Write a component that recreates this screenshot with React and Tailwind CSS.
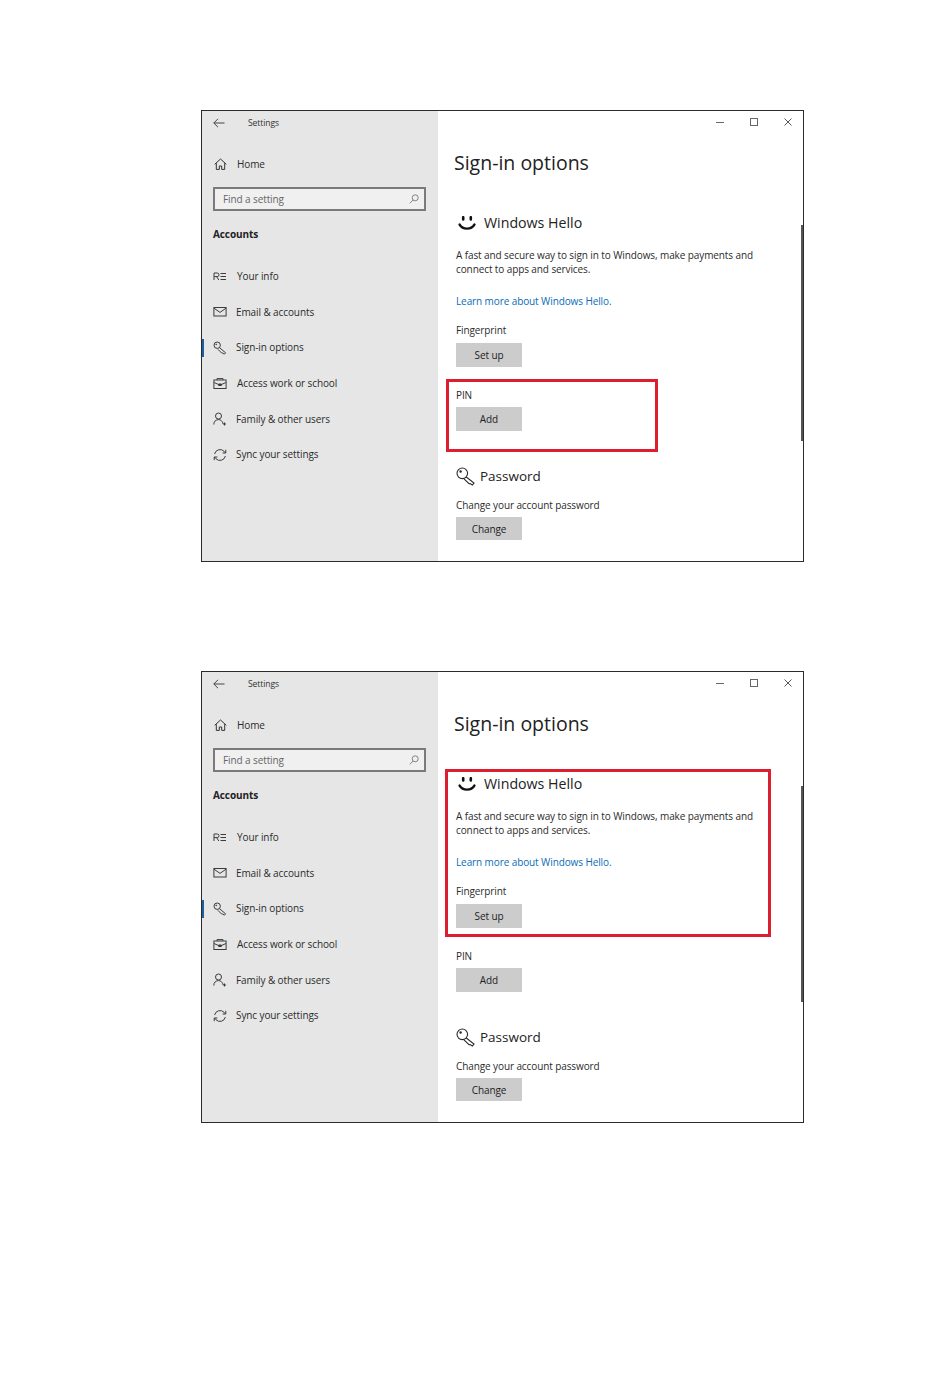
const navItems = [
  { label: "Your info", icon: "info", textClass: "ml-[10px]" },
  { label: "Email & accounts", icon: "mail", textClass: "ml-[9px]" },
  { label: "Sign-in options", icon: "key", textClass: "ml-[9px]", active: true },
  { label: "Access work or school", icon: "work", textClass: "ml-[10px]" },
  { label: "Family & other users", icon: "family", textClass: "ml-[9px]" },
  { label: "Sync your settings", icon: "sync", textClass: "ml-[9px]" },
];

function NavIcon({ name }) {
  const common = {
    width: 14,
    height: 14,
    viewBox: "0 0 14 14",
    fill: "none",
    stroke: "#3c3c3c",
    strokeWidth: 1,
  };
  if (name === "info") {
    return (
      <svg {...common}>
        <path d="M1 10V3h3.2a1.8 1.8 0 0 1 0 3.6H1M3.6 6.6 5.8 10M7.5 3.5H13M7.5 6.5H13M7.5 9.5H13" />
      </svg>
    );
  }
  if (name === "mail") {
    return (
      <svg {...common}>
        <rect x="0.9" y="2.5" width="12.2" height="8.5" />
        <path d="M1 3.2 7 7.4l6-4.2" />
      </svg>
    );
  }
  if (name === "key") {
    return (
      <svg {...common}>
        <circle cx="4.2" cy="4.2" r="3.2" />
        <path d="m6.4 6.6 6.2 5.2-1.3 1.4-1.7-1.3-.9.2-3.8-3.8" />
        <circle cx="3.2" cy="3.4" r=".4" fill="#3c3c3c" />
      </svg>
    );
  }
  if (name === "work") {
    return (
      <svg {...common}>
        <rect x="0.9" y="3" width="12.2" height="8.5" />
        <path d="M4 3V1.6h6V3M1 5.5l4.6 2h2.8l4.6-2M5.6 7h2.8v1.5H5.6z" />
      </svg>
    );
  }
  if (name === "family") {
    return (
      <svg {...common}>
        <circle cx="5.5" cy="4" r="3" />
        <path d="M.8 12.5c0-3 2-4.9 4.7-4.9 1.2 0 2.2.4 3 1.2 1 .9 1.4 2 1.5 3.2M11.5 10.5v3M10 12h3" />
      </svg>
    );
  }
  return (
    <svg {...common}>
      <path d="M1.6 6a5.6 5.6 0 0 1 9.6-2.6L12.6 5M12.4 8a5.6 5.6 0 0 1-9.6 2.6L1.4 9" />
      <path d="M12.8 1.8V5H9.6M1.2 12.2V9h3.2" />
    </svg>
  );
}

function KeyLarge() {
  return (
    <svg width="19" height="19" viewBox="0 0 19 19" fill="none" stroke="#2a2a2a" strokeWidth="1.1">
      <circle cx="6.3" cy="6.3" r="5.3" />
      <circle cx="4.6" cy="4.6" r=".7" fill="#2a2a2a" />
      <path d="m10 9.8 8 6.2-1.7 2-2.2-1.5-1.1.2-5-4.9" />
    </svg>
  );
}

function Smile() {
  return (
    <svg width="18" height="14" viewBox="0 0 18 14" fill="none" stroke="#111" strokeLinecap="round">
      <path d="M5.2 1.2v2.2M12.8 1.2v2.2" strokeWidth="2.6" />
      <path d="M1.6 8.6c1.5 2.6 4.2 4 7.4 4s5.9-1.4 7.4-4" strokeWidth="2.4" />
    </svg>
  );
}

function SettingButton({ label, className }) {
  return (
    <button type="button" className={`block h-6 w-[66px] bg-[#cccccc] text-[10px] leading-6 text-[#222] ${className || ""}`}>
      {label}
    </button>
  );
}

function SettingsWindow({ children }) {
  return (
    <div className="relative flex h-[452px] w-[603px] border border-[#2b2b2b] bg-white font-['Open_Sans',sans-serif] text-[10px] tracking-[-0.1px] text-[#2b2b2b]">
      <aside className="flex w-[236px] shrink-0 flex-col bg-[#e6e6e6]">
        <div className="flex h-6 items-center pl-[11px]">
          <svg width="12" height="10" viewBox="0 0 12 10" fill="none" stroke="#444" strokeWidth="1">
            <path d="M11.5 5H.8M5 .8.8 5 5 9.2" />
          </svg>
          <span className="ml-[23px] text-[8.6px] text-[#333]">Settings</span>
        </div>
        <div className="mt-[17px] flex h-6 items-center pl-[12px]">
          <svg width="13" height="12" viewBox="0 0 13 12" fill="none" stroke="#333" strokeWidth="1">
            <path d="M.7 6.3 6.5 1l5.8 5.3M2.3 5.2v6.2h3V8h2.4v3.4h3V5.2" />
          </svg>
          <span className="ml-[10px]">Home</span>
        </div>
        <div className="ml-[11px] mt-[11px] flex h-[24px] w-[213px] items-center justify-between border-2 border-[#7a7a7a] bg-[#f0f0f0] pl-2 pr-[5px] text-[#666]">
          <span>Find a setting</span>
          <svg width="10" height="10" viewBox="0 0 10 10" fill="none" stroke="#777" strokeWidth=".9">
            <circle cx="6.2" cy="3.8" r="3" />
            <path d="M4 6 .8 9.4" />
          </svg>
        </div>
        <div className="ml-[11px] mt-[13px] font-bold leading-[20px] text-[#222]">Accounts</div>
        <nav className="mt-[15px] flex flex-col">
          {navItems.map((item) => (
            <div key={item.label} className="relative flex h-[35.6px] items-center pl-[11px]">
              {item.active && <span className="absolute left-0 top-[9px] h-[18px] w-[2px] bg-[#1f5f9e]" />}
              <NavIcon name={item.icon} />
              <span className={item.textClass}>{item.label}</span>
            </div>
          ))}
        </nav>
      </aside>
      <main className="relative min-w-0 flex-1 pl-[18px]">
        <div className="absolute right-[11px] top-[5px] flex h-3 w-[76px] items-center justify-between text-[#444]">
          <span className="h-px w-[8px] bg-[#666]" />
          <span className="h-[8px] w-[8px] border border-[#666]" />
          <svg width="8" height="8" viewBox="0 0 8 8" stroke="#444" strokeWidth=".9">
            <path d="m.5.5 7 7M7.5.5l-7 7" />
          </svg>
        </div>
        <span className="absolute right-0 top-[114px] h-[216px] w-[2px] bg-[#555]" />
        <h1 className="-ml-[2px] pt-[36px] text-[19.5px] font-normal leading-[32px] tracking-normal text-[#222]">Sign-in options</h1>
        <div className="ml-[2px] mt-[32px] flex h-6 items-center">
          <Smile />
          <h2 className="ml-[8px] text-[14.2px] font-normal tracking-normal text-[#222]">Windows Hello</h2>
        </div>
        <p className="mt-[13px] w-[310px] leading-[14px]">
          A fast and secure way to sign in to Windows, make payments and connect to apps and services.
        </p>
        <a className="mt-[18px] block leading-[14px] text-[#0a6cb8]">Learn more about Windows Hello.</a>
        <div className="mt-[15px] leading-[14px]">Fingerprint</div>
        <SettingButton label="Set up" className="mt-[6px]" />
        <div className="mt-[21px] leading-[14px]">PIN</div>
        <SettingButton label="Add" className="mt-[5px]" />
        <div className="mt-[33px] flex h-6 items-center">
          <KeyLarge />
          <h2 className="ml-[5px] text-[13.5px] font-normal tracking-normal text-[#222]">Password</h2>
        </div>
        <div className="mt-[10px] leading-[14px]">Change your account password</div>
        <SettingButton label="Change" className="mt-[5px] h-[23px]" />
      </main>
      {children}
    </div>
  );
}

export default function App() {
  return (
    <div className="flex min-h-[1381px] flex-col items-start gap-[109px] bg-white pl-[201px] pt-[110px]">
      <SettingsWindow>
        <div className="absolute left-[244px] top-[268px] h-[73px] w-[212px] border-[3px] border-[#dc1f2e]" />
      </SettingsWindow>
      <SettingsWindow>
        <div className="absolute left-[243px] top-[97px] h-[168px] w-[326px] border-[3px] border-[#dc1f2e]" />
      </SettingsWindow>
    </div>
  );
}
